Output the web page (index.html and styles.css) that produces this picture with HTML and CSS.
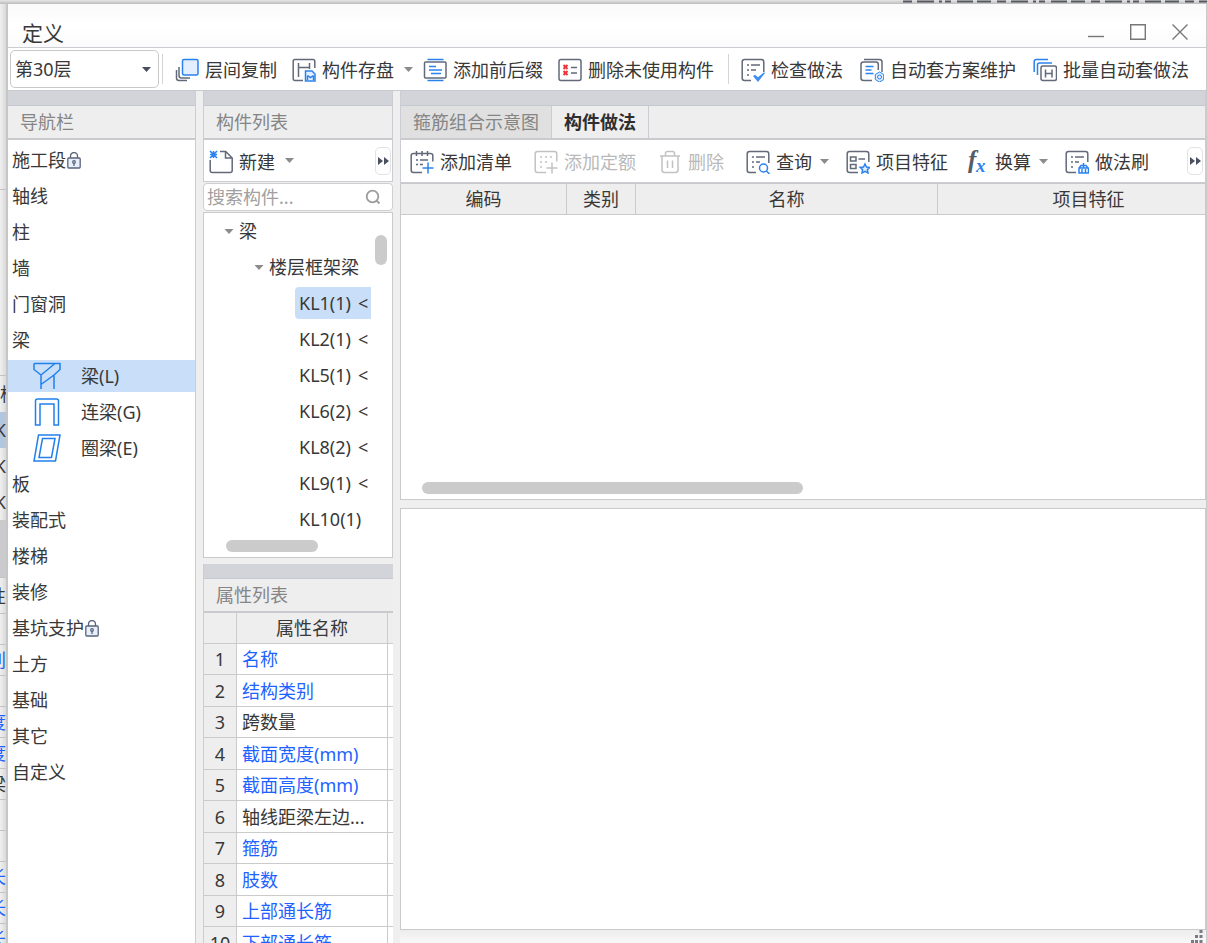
FILE: index.html
```html
<!DOCTYPE html>
<html lang="zh-CN">
<head>
<meta charset="utf-8">
<title>定义</title>
<link rel="stylesheet" href="styles.css">
</head>
<body>
<div class="backdrop-top" aria-hidden="true">
  <svg width="304" height="3" viewBox="0 0 304 3" stroke="#55585f" stroke-width="2"><path d="M0 1.500h304" stroke-dasharray="9 5 17 5 3 3 6 6 16 4 14 6"/></svg>
</div>
<div class="desk">
<div class="backdrop-left" aria-hidden="true">
  <div class="strip"></div>
  <div class="strip line"></div>
  <div class="cell start">构</div>
  <div class="cell picked">K</div>
  <div class="cell">K</div>
  <div class="cell">K</div>
  <div class="strip dark"></div>
  <div class="cell ruled">性</div>
  <div class="row"></div>
  <div class="row blue">别</div>
  <div class="row"></div>
  <div class="row blue">度</div>
  <div class="row blue">度</div>
  <div class="row">梁</div>
  <div class="row"></div>
  <div class="row"></div>
  <div class="row blue">长</div>
  <div class="row blue">长</div>
  <div class="row blue">长</div>
</div>
<main class="window">
  <header class="titlebar">
    <h1>定义</h1>
    <div class="winbtns">
      <button type="button" aria-label="最小化"><svg width="16" height="16" viewBox="0 0 16 16"><path d="M0 12.500h16"/></svg></button>
      <button type="button" aria-label="最大化"><svg width="16" height="16" viewBox="0 0 16 16"><path d="M.7.700h14.600v14.600H.7z"/></svg></button>
      <button type="button" aria-label="关闭"><svg width="16" height="16" viewBox="0 0 16 16"><path d="M.5.500l15 15M15.500.500l-15 15"/></svg></button>
    </div>
  </header>

  <div class="toolbar main-tools">
    <div class="floor">
      <select aria-label="楼层"><option>第30层</option></select>
      <svg class="floor-arrow" width="9" height="5" viewBox="0 0 9 5"><path d="M0 0h9L4.500 5z" fill="#4a4f5c"/></svg>
    </div>
    <span class="sep"></span>
    <button type="button" class="tool"><svg class="ic" viewBox="0 0 24 24"><path d="M4 9v8.500Q4 20 6.500 20H15M1.500 12v8q0 2.500 2.500 2.500h8"/><rect class="b tint" x="7.500" y="1.500" width="15.500" height="15.500" rx="1.500"/></svg>层间复制</button>
    <button type="button" class="tool"><svg class="ic" viewBox="0 0 24 24"><path d="M11 22.500H3Q1.200 22.500 1.200 20.500V3.500Q1.200 1.500 3 1.500h18q1.800 0 1.800 2V10"/><path d="M6.500 5v14M6.500 9.500h11M17.500 5v6"/><path class="b tint" d="M13.500 13h6.500l3 3v7h-9.500z"/><path class="b" d="M15.500 17.500l3 2 3-2M15.500 22v-4.500M21.500 22v-4.500"/></svg>构件存盘</button>
    <svg class="caret" viewBox="0 0 9 5"><path d="M0 0h9L4.500 5z"/></svg>
    <button type="button" class="tool"><svg class="ic" viewBox="0 0 24 24"><rect x="1.500" y="4" width="21.500" height="16" rx="1"/><path class="b" d="M4.500 1.500h16M4.500 22.500h16M6 8.500h7M6 12h13M8 15.500h10"/></svg>添加前后缀</button>
    <button type="button" class="tool"><svg class="ic" viewBox="0 0 24 24"><rect x="1" y="1.500" width="22" height="21" rx="2"/><path d="M5.500 7l4 4M9.500 7l-4 4M5.500 13l4 4M9.500 13l-4 4" style="stroke:#f0323c;stroke-width:2"/><path d="M13 9.500h6M13 15h6"/></svg>删除未使用构件</button>
    <span class="sep"></span>
    <button type="button" class="tool roomy"><svg class="ic" viewBox="0 0 24 24"><path d="M10 22.500H3.500Q1.200 22.500 1.200 20V4Q1.200 1.500 3.500 1.500h17q2.300 0 2.300 2.500v10"/><path d="M6 7h2M10 7h9M6 12h2M10 12h5M6 17h2"/><path class="bf" d="M12 18l2-1.200 3 2.500 6-5 1 .8L17 24z"/></svg>检查做法</button>
    <button type="button" class="tool roomy"><svg class="ic" viewBox="0 0 24 24"><path d="M12 22.500H3.500Q1 22.500 1 20V6.500Q1 4 3.500 4H16q2.300 0 2.300 2.500V12M4 1.500h15.500q2.500 0 2.500 2.500v10"/><path class="b" d="M5.500 8.500h8M5.500 12h6M5.500 15.500h8"/><path class="b thin tint" d="M19.500 14l4.200 2.500v5L19.500 24l-4.200-2.500v-5z"/><circle class="b thin" cx="19.500" cy="19" r="2"/></svg>自动套方案维护</button>
    <button type="button" class="tool"><svg class="ic" viewBox="0 0 24 24"><path class="b" d="M1.200 14V3.500q0-2 2-2H15M4.500 17V7q0-2 2-2H19"/><rect x="8" y="8" width="15.500" height="14.500" rx="2"/><path d="M12.500 11.500v8M19 11.500v8M12.500 15.500H19"/></svg>批量自动套做法</button>
  </div>

  <div class="docks">
    <nav class="dock">
      <div class="grab"></div>
      <h2 class="cap">导航栏</h2>
      <ul class="nav">
        <li><a href="#">施工段<svg class="lock" viewBox="0 0 14 17"><path d="M3.500 6V4a3.500 3.500 0 0 1 7 0v2"/><rect x=".8" y="6" width="12.400" height="10" rx="1"/><circle cx="7" cy="10" r="1.300"/><path d="M7 11v3"/></svg></a></li>
        <li><a href="#">轴线</a></li>
        <li><a href="#">柱</a></li>
        <li><a href="#">墙</a></li>
        <li><a href="#">门窗洞</a></li>
        <li><a href="#">梁</a></li>
        <li><a href="#" class="sub on"><svg viewBox="0 0 28 28"><path d="M1 1.500h26v6l-6 5.500v14M1 1.500v6l7 5.500v14M8 13L22 1.500M8 22.500l13-9.500"/></svg>梁(L)</a></li>
        <li><a href="#" class="sub"><svg viewBox="0 0 28 28"><path d="M2.500 27V3q0-2 2-2h19q2 0 2 2v24h-4.500V6H7v21z"/></svg>连梁(G)</a></li>
        <li><a href="#" class="sub"><svg viewBox="0 0 28 28"><path d="M5.500 1H27l-4.500 26H1zM9.500 4.500h12.500l-3.500 19H6z"/></svg>圈梁(E)</a></li>
        <li><a href="#">板</a></li>
        <li><a href="#">装配式</a></li>
        <li><a href="#">楼梯</a></li>
        <li><a href="#">装修</a></li>
        <li><a href="#">基坑支护<svg class="lock" viewBox="0 0 14 17"><path d="M3.500 6V4a3.500 3.500 0 0 1 7 0v2"/><rect x=".8" y="6" width="12.400" height="10" rx="1"/><circle cx="7" cy="10" r="1.300"/><path d="M7 11v3"/></svg></a></li>
        <li><a href="#">土方</a></li>
        <li><a href="#">基础</a></li>
        <li><a href="#">其它</a></li>
        <li><a href="#">自定义</a></li>
      </ul>
    </nav>

    <div class="middle">
      <section class="parts">
        <div class="dock">
          <div class="grab"></div>
          <h2 class="cap">构件列表</h2>
          <div class="toolbar part-tools">
            <button type="button" class="tool"><svg class="ic" viewBox="0 0 24 24"><path d="M1.200 10v10.500q0 2 2 2h18q2 0 2-2V8l-6.500-6.500H11M16.500 1.500V8H23"/><path class="b" d="M1 1l7 7M8 1L1 8M4.500 1v7M1 4.500h7"/></svg>新建</button>
            <svg class="caret" viewBox="0 0 9 5"><path d="M0 0h9L4.500 5z"/></svg>
            <button type="button" class="more" aria-label="更多"><svg viewBox="0 0 11 8"><path d="M0 0l5 4-5 4zM6 0l5 4-5 4z"/></svg></button>
          </div>
        </div>
        <div class="search">
          <input type="text" placeholder="搜索构件..." aria-label="搜索构件">
          <svg width="16" height="16" viewBox="0 0 16 16"><circle cx="7.500" cy="7.500" r="5.800"/><path d="M11.500 11.500l3 3"/></svg>
        </div>
        <div class="tree">
          <ul>
            <li class="l1"><svg class="caret" viewBox="0 0 9 5"><path d="M0 0h9L4.500 5z"/></svg>梁</li>
            <li class="l2"><svg class="caret" viewBox="0 0 9 5"><path d="M0 0h9L4.500 5z"/></svg>楼层框架梁</li>
            <li class="l3"><a href="#" class="on">KL1(1)<span>&lt;</span></a></li>
            <li class="l3"><a href="#">KL2(1)<span>&lt;</span></a></li>
            <li class="l3"><a href="#">KL5(1)<span>&lt;</span></a></li>
            <li class="l3"><a href="#">KL6(2)<span>&lt;</span></a></li>
            <li class="l3"><a href="#">KL8(2)<span>&lt;</span></a></li>
            <li class="l3"><a href="#">KL9(1)<span>&lt;</span></a></li>
            <li class="l3"><a href="#">KL10(1)</a></li>
          </ul>
          <span class="vthumb"></span>
          <span class="hthumb"></span>
        </div>
      </section>
      <section class="dock props">
        <div class="grab"></div>
        <h2 class="cap">属性列表</h2>
        <table>
          <colgroup><col class="c-num"><col><col class="c-end"></colgroup>
          <thead><tr><th></th><th>属性名称</th><th></th></tr></thead>
          <tbody>
            <tr><th>1</th><td class="link">名称</td><td></td></tr>
            <tr><th>2</th><td class="link">结构类别</td><td></td></tr>
            <tr><th>3</th><td>跨数量</td><td></td></tr>
            <tr><th>4</th><td class="link">截面宽度(mm)</td><td></td></tr>
            <tr><th>5</th><td class="link">截面高度(mm)</td><td></td></tr>
            <tr><th>6</th><td>轴线距梁左边...</td><td></td></tr>
            <tr><th>7</th><td class="link">箍筋</td><td></td></tr>
            <tr><th>8</th><td class="link">肢数</td><td></td></tr>
            <tr><th>9</th><td class="link">上部通长筋</td><td></td></tr>
            <tr><th>10</th><td class="link">下部通长筋</td><td></td></tr>
          </tbody>
        </table>
      </section>
    </div>

    <section class="right">
      <div class="dock">
        <div class="grab"></div>
        <div class="tabs" role="tablist">
          <button type="button" role="tab">箍筋组合示意图</button>
          <button type="button" role="tab" class="on" aria-selected="true">构件做法</button>
        </div>
        <div class="toolbar work-tools">
          <button type="button" class="tool wide"><svg class="ic" viewBox="0 0 24 24"><path d="M12 22.500H3.500Q1.200 22.500 1.200 20V5.500Q1.200 3.500 3.500 3.500h17q2.300 0 2.300 2v6M6.500 1v5M12 1v5M17.500 1v5M6 10h2M10 10h8M6 14.500h2M10 14.500h3"/><path class="b" d="M18 12.500v11M12.500 18h11"/></svg>添加清单</button>
          <button type="button" class="tool wide" disabled><svg class="ic" viewBox="0 0 24 24"><path d="M12 22.500H3.500Q1.200 22.500 1.200 20V4Q1.200 1.500 3.500 1.500h17q2.300 0 2.300 2.500v7.500M6 7h2M11 7h2M16 7h2M6 12h2M11 12h2M6 17h2M18 12.500v11M12.500 18h11"/></svg>添加定额</button>
          <button type="button" class="tool wide" disabled><svg class="ic" viewBox="0 0 24 24"><path d="M2 6h20M7.500 6V3.500q0-2 2-2h5q2 0 2 2V6M4 6v14q0 2.500 2.500 2.500h11Q20 22.500 20 20V6M9.500 10.500v7.500M14.500 10.500v7.500"/></svg>删除</button>
          <button type="button" class="tool"><svg class="ic" viewBox="0 0 24 24"><path d="M10 22.500H3.500Q1.200 22.500 1.200 20V4Q1.200 1.500 3.500 1.500h17q2.300 0 2.300 2.500v9M6 7h2M10 7h9M6 12h2M10 12h4M6 17h2"/><circle class="b" cx="17.500" cy="18" r="4"/><path class="b" d="M20.500 21l3 3"/></svg>查询</button>
          <svg class="caret" viewBox="0 0 9 5"><path d="M0 0h9L4.500 5z"/></svg>
          <button type="button" class="tool"><svg class="ic" viewBox="0 0 24 24"><path d="M12 22.500H3.500Q1.200 22.500 1.200 20V4Q1.200 1.500 3.500 1.500h17q2.300 0 2.300 2.500v8M4.500 7h5.500v4H4.500zM4.500 14.500H10v4H4.500zM12.500 9H19"/><path class="b tint" d="M19 14l1.500 3 3.300.4-2.400 2.200.6 3.400-3-1.600-3 1.600.6-3.400-2.400-2.200 3.300-.4z"/></svg>项目特征</button>
          <button type="button" class="tool"><svg class="ic" viewBox="0 0 24 24"><text x="3" y="18" class="f">f</text><text x="11" y="22" class="x">x</text></svg>换算</button>
          <svg class="caret" viewBox="0 0 9 5"><path d="M0 0h9L4.500 5z"/></svg>
          <button type="button" class="tool"><svg class="ic" viewBox="0 0 24 24"><path d="M11 22.500H3.500Q1.200 22.500 1.200 20V4Q1.200 1.500 3.500 1.500h17q2.300 0 2.300 2.500v8M6 7h2M10 7h9M6 12h2M10 12h4M6 17h2"/><path class="b" d="M14 23v-5h9.500v5zM18.500 13v5M14.500 17.500l1.500-2h5l1.500 2M17 19v4M20.500 19v4"/></svg>做法刷</button>
          <button type="button" class="more" aria-label="更多"><svg viewBox="0 0 11 8"><path d="M0 0l5 4-5 4zM6 0l5 4-5 4z"/></svg></button>
        </div>
      </div>
      <div class="sheet">
        <table>
          <colgroup><col class="c-code"><col class="c-kind"><col class="c-name"><col></colgroup>
          <thead><tr><th>编码</th><th>类别</th><th>名称</th><th class="feature">项目特征</th></tr></thead>
        </table>
        <span class="hthumb"></span>
      </div>
      <div class="detail"></div>
      <footer class="status"><svg width="14" height="14" viewBox="0 0 14 14"><path d="M9.500 0h3v3h-3zM5 5h3v3H5zM9.500 5h3v3h-3zM1 10h3v3H1zM5 10h3v3H5zM9.500 10h3v3h-3z"/></svg></footer>
    </section>
  </div>
</main>
</div>
</body>
</html>
```

FILE: styles.css
```css
* { box-sizing: border-box; }

body {
  margin: 0;
  height: 100vh;
  overflow: hidden;
  display: flex;
  flex-direction: column;
  background: #efefef;
  color: #383838;
  font: 18px/24px "Noto Sans", "Noto Sans CJK SC", sans-serif;
}

button, input, select { font: inherit; color: inherit; margin: 0; }
button { border: 0; padding: 0; background: none; white-space: nowrap; }
ul { list-style: none; margin: 0; padding: 0; }
a { color: inherit; text-decoration: none; }
h1, h2 { margin: 0; font-weight: 400; }

/* parent window showing round the dialog */
.backdrop-top {
  flex: none;
  height: 4px;
  display: flex;
  justify-content: flex-end;
  background: linear-gradient(#e6e6e6, #bcbcbc);
}
.desk { flex: 1; min-height: 0; display: flex; }
.backdrop-left {
  width: 6px;
  flex: none;
  overflow: hidden;
  background: linear-gradient(90deg, #f0f0f0, #dadada);
}
.backdrop-left > div {
  display: flex;
  justify-content: flex-end;
  align-items: center;
  height: 36px;
}
.backdrop-left .start { justify-content: flex-start; }
.backdrop-left .strip { height: 186px; border-bottom: 1px solid #c4c4c4; }
.backdrop-left .dark { height: 58px; background: #cbcbcd; }
.backdrop-left .picked { background: #b3c6e0; }
.backdrop-left .ruled { border-bottom: 1px solid #c4c4c4; }
.backdrop-left .row { height: 31px; border-bottom: 1px solid #c4c4c4; }
.backdrop-left .blue, .link { color: #1e62ff; }

.window {
  flex: 1;
  min-width: 0;
  display: flex;
  flex-direction: column;
  background: #efefef;
  border-left: 2px solid #c6c6c6;
  border-right: 1px solid #c8cacd;
}

.titlebar {
  flex: none;
  height: 44px;
  padding: 12px 18px 0 14px;
  display: flex;
  justify-content: space-between;
  background: linear-gradient(#fafafa, #fff 50%, #fbfbfb);
  border-bottom: 1px solid #cbcdd2;
}
.titlebar h1 { font-size: 21px; line-height: 34px; }
.winbtns { display: flex; gap: 26px; height: 32px; }
.winbtns svg { display: block; fill: none; stroke: #777; stroke-width: 1.400; }

.toolbar { display: flex; align-items: center; background: #fff; flex: none; }
.main-tools {
  height: 43px;
  gap: 15px;
  padding-left: 2px;
  border-bottom: 1px solid #c8cacd;
}
.tool { display: flex; align-items: center; gap: 6px; flex: none; padding-top: 2px; }
.tool:disabled { color: #b9b9b9; }
.tool.roomy { margin-right: 2px; }
.tool.wide { margin-right: 5px; }
.floor { position: relative; flex: none; width: 149px; margin-right: -11px; }
.floor select {
  display: block;
  appearance: none;
  width: 100%;
  height: 38px;
  padding: 0 4px;
  background: #fff;
  border: 1px solid #c9c9c9;
  border-radius: 5px;
}
.floor-arrow { position: absolute; right: 8px; top: 17px; }
.sep { width: 1px; height: 30px; background: #d4d4d4; margin: 0 -3px 0 -1px; flex: none; }

.ic {
  width: 24px;
  height: 24px;
  flex: none;
  fill: none;
  stroke: #626979;
  stroke-width: 1.500;
}
.tool:disabled .ic { stroke: #c2c2c2; }
.ic .b { stroke: #2b82ee; }
.ic .thin { stroke-width: 1; }
.ic .tint { fill: #e3efff; }
.ic .bf { fill: #3d8df2; stroke: none; }
.ic .f { font: italic 700 25px "Liberation Serif", serif; fill: #555b69; stroke: none; }
.ic .x { font: italic 700 19px "Liberation Serif", serif; fill: #2b82ee; stroke: none; }
.caret { width: 9px; height: 5px; flex: none; fill: #8b8b8b; margin: 0 -5px; }

.docks {
  flex: 1;
  min-height: 0;
  display: grid;
  grid-template-columns: 188px 190px minmax(0, 1fr);
  grid-template-rows: minmax(0, 1fr);
  gap: 7px;
}
.dock { border: 1px solid #cbcdd2; border-top: 0; background: #fff; flex: none; }
.grab { height: 15px; background: #d2d4da; border-bottom: 1px solid #c5c8cf; }
.cap {
  height: 34px;
  padding-left: 12px;
  font-size: 18px;
  line-height: 32px;
  color: #858585;
  background: #eee;
  border-bottom: 2px solid #c8cacd;
}

nav.dock { border-left: 0; border-bottom: 0; overflow: hidden; }
.nav { padding-top: 2px; }
.nav li { height: 36px; padding: 2px 0; }
.nav a { display: flex; align-items: center; height: 32px; padding-left: 4px; }
.nav .sub { padding-left: 25px; gap: 20px; }
.nav .sub svg { width: 28px; height: 28px; fill: none; stroke: #2280ea; stroke-width: 1.500; }
.nav .on, .tree .on { background: #c9dff9; }
.lock { width: 14px; height: 17px; margin-left: 1px; fill: #e6effb; stroke: #59647a; stroke-width: 1.300; }
.lock path { fill: none; }

.middle { display: flex; flex-direction: column; gap: 6px; min-height: 0; }
.parts { flex: none; display: flex; flex-direction: column; gap: 1px; }
.part-tools { height: 41px; gap: 15px; padding: 0 1px 0 5px; }
.part-tools .caret { margin-right: 0; }
.more {
  width: 16px;
  height: 28px;
  margin-left: auto;
  border: 1px solid #e2e2e2;
  border-radius: 5px;
  flex: none;
}
.more svg { display: block; width: 11px; height: 8px; margin: 0 auto; fill: #4b5060; }
.search {
  display: flex;
  align-items: center;
  height: 28px;
  padding: 0 11px 0 3px;
  background: #fff;
  border: 1px solid #cfcfcf;
  border-radius: 4px;
}
.search input { flex: 1; min-width: 0; border: 0; padding: 0; background: none; outline: 0; }
.search input::placeholder { color: #a0a0a0; opacity: 1; }
.search svg { fill: none; stroke: #9b9b9b; stroke-width: 1.800; }
.tree {
  position: relative;
  background: #fff;
  border: 1px solid #c8cacd;
  padding: 0 21px 20px 0;
}
.tree li { height: 36px; display: flex; align-items: center; overflow: hidden; white-space: nowrap; }
.tree .caret { margin: 0 5px 0 0; width: 10px; }
.tree .l1 { padding-left: 20px; }
.tree .l2 { padding-left: 50px; }
.tree .l3 { padding-left: 91px; }
.tree a { flex: 1; display: flex; gap: 7px; height: 32px; line-height: 32px; padding-left: 4px; border-radius: 4px 0 0 4px; }
.vthumb, .hthumb { position: absolute; background: #cbcbcb; border-radius: 6px; }
.vthumb { width: 12px; height: 30px; right: 5px; top: 22px; }
.hthumb { height: 12px; bottom: 5px; left: 22px; width: 49%; }

.props { flex: 1 1 0; min-height: 0; overflow: hidden; border-bottom: 0; border-right: 0; }
table { width: 100%; table-layout: fixed; border-collapse: separate; border-spacing: 0; }
th { font-weight: 400; background: #eee; }
th, td {
  padding: 0;
  height: 31px;
  line-height: 24px;
  border-right: 1px solid #cbcbcb;
  border-bottom: 1px solid #cbcbcb;
  white-space: nowrap;
}
.props td { padding-left: 5px; }
.props tr > :last-child { border-right: 0; padding: 0; }
.props tbody tr:nth-child(even) > * { height: 32px; }
.c-num { width: 33px; }
.c-end { width: 5px; }

.right { display: flex; flex-direction: column; min-width: 0; min-height: 0; }
.tabs { display: flex; height: 34px; background: #eee; border-bottom: 2px solid #c8cacd; }
.tabs button { padding: 0 12px; line-height: 32px; color: #858585; background: #e0e0e0; border-right: 1px solid #cbcdd2; }
.tabs .on { background: #eee; color: #2e2e2e; font-weight: 700; }
.work-tools { height: 42px; gap: 17px; padding: 0 2px 0 9px; }
.work-tools .caret { margin: 0 0 0 -9px; }
.sheet, .detail { background: #fff; border: 1px solid #c8cacd; }
.sheet { position: relative; flex: 3 1 0; margin-bottom: 8px; overflow: hidden; }
.sheet th:last-child { border-right: 0; }
.sheet .feature { padding-left: 34px; }
.sheet .hthumb { left: 21px; width: 381px; }
.detail { flex: 4 1 0; }
.c-code { width: 166px; }
.c-kind { width: 69px; }
.c-name { width: 302px; }
.status { flex: none; height: 13px; display: flex; justify-content: flex-end; padding-right: 2px; background: linear-gradient(#ededed, #f8f8f8); }
.status svg { fill: #777b86; }
```
